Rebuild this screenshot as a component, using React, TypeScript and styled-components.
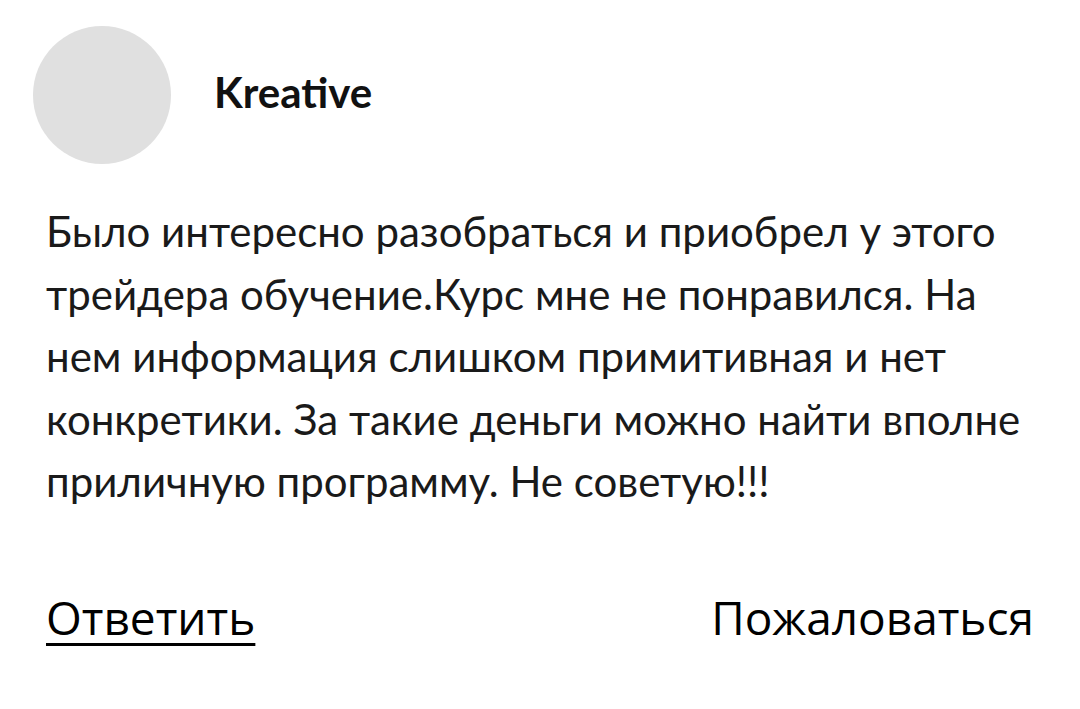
import styled, { createGlobalStyle } from "styled-components";

const GlobalStyle = createGlobalStyle`
  html, body {
    margin: 0;
    padding: 0;
    background: #fff;
  }
  body {
    font-family: Lato, "Liberation Sans", sans-serif;
    color: #111;
  }
`;

const App = () => {
  return (
    <>
      <GlobalStyle />
      <Card>
        <Header>
          <Avatar />
          <Name>Kreative</Name>
        </Header>
        <Text>
          Было интересно разобраться и приобрел у этого трейдера обучение.Курс
          мне не понравился. На нем информация слишком примитивная и нет
          конкретики. За такие деньги можно найти вполне приличную программу.
          Не советую!!!
        </Text>
        <Actions>
          <Action $underline>Ответить</Action>
          <Action>Пожаловаться</Action>
        </Actions>
      </Card>
    </>
  );
};

const Card = styled.div`
  padding: 26px 46px 0 46px;
  display: flex;
  flex-direction: column;
`;

const Header = styled.div`
  display: flex;
  align-items: center;
  gap: 43px;
  margin-left: -13px;
`;

const Avatar = styled.div`
  width: 138px;
  height: 138px;
  border-radius: 50%;
  background: #e0e0e0;
  flex-shrink: 0;
`;

const Name = styled.h3`
  margin: 0 0 6px;
  font-size: 42px;
  font-weight: 700;
  color: #111;
`;

const Text = styled.p`
  margin: 36px 0 0;
  font-size: 42px;
  line-height: 62.5px;
  color: #1a1a1a;
  max-width: 990px;
`;

const Actions = styled.div`
  display: flex;
  justify-content: space-between;
  margin-top: 73px;
  width: 988px;
`;

const Action = styled.a<{ $underline?: boolean }>`
  font-family: "Open Sans", "Noto Sans", sans-serif;
  font-size: 46px;
  color: #000;
  text-decoration: ${(p) => (p.$underline ? "underline" : "none")};
  text-decoration-thickness: 3px;
  text-underline-offset: 8px;
  cursor: pointer;
`;

export default App;
